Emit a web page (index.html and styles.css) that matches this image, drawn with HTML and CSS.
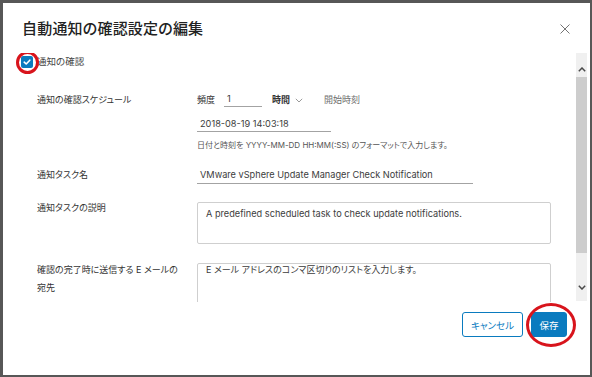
FILE: index.html
```html
<!DOCTYPE html>
<html lang="ja">
<head>
<meta charset="utf-8">
<title>自動通知の確認設定の編集</title>
<link rel="stylesheet" href="styles.css">
</head>
<body>
<div class="dialog">
  <div class="header">
    <h1 class="title">自動通知の確認設定の編集</h1>
    <svg class="close" width="10" height="10" viewBox="0 0 10 10"><path d="M0.5 0.5 L9.5 9.5 M9.5 0.5 L0.5 9.5" stroke="#747474" stroke-width="1" fill="none"/></svg>
  </div>
  <div class="body">
    <div class="content">
      <div class="check-row">
        <span class="checkbox"><svg width="12" height="12" viewBox="0 0 12 12"><path d="M3.2 6.2 L5.2 8 L8.8 4.2" stroke="#fff" stroke-width="1.6" fill="none" stroke-linecap="round" stroke-linejoin="round"/></svg></span>
        <span class="check-label">通知の確認</span>
        <span class="ring ring-check"></span>
      </div>

      <div class="row row-schedule">
        <div class="label">通知の確認スケジュール</div>
        <div class="control">
          <div class="freq-line">
            <span class="freq-text">頻度</span>
            <span class="input freq">1</span>
            <span class="unit">時間</span>
            <svg class="chev" width="8" height="5" viewBox="0 0 8 5"><path d="M0.8 0.8 L4 4 L7.2 0.8" stroke="#9a9a9a" stroke-width="1" fill="none"/></svg>
            <span class="muted">開始時刻</span>
          </div>
          <div class="input date">2018-08-19 14:03:18</div>
          <div class="help">日付と時刻を YYYY-MM-DD HH:MM(:SS) のフォーマットで入力します。</div>
        </div>
      </div>

      <div class="row row-task">
        <div class="label">通知タスク名</div>
        <div class="input task">VMware vSphere Update Manager Check Notification</div>
      </div>

      <div class="row row-desc">
        <div class="label label-tight">通知タスクの説明</div>
        <div class="textarea desc">A predefined scheduled task to check update notifications.</div>
      </div>

      <div class="row row-email">
        <div class="label label-wrap">確認の完了時に送信する E メールの<span class="nw">宛先</span></div>
        <div class="textarea email">E メール アドレスのコンマ区切りのリストを入力します。</div>
      </div>
    </div>
    <div class="scrollbar">
      <div class="sb-up"><svg width="8" height="5" viewBox="0 0 8 5"><path d="M0.8 4.2 L4 1 L7.2 4.2" stroke="#4a4a4a" stroke-width="1.5" fill="none"/></svg></div>
      <div class="sb-thumb"></div>
      <div class="sb-down"><svg width="8" height="5" viewBox="0 0 8 5"><path d="M0.8 0.8 L4 4 L7.2 0.8" stroke="#4a4a4a" stroke-width="1.5" fill="none"/></svg></div>
    </div>
  </div>
  <div class="footer">
    <button class="btn btn-outline">キャンセル</button>
    <span class="save-wrap">
      <button class="btn btn-primary">保存</button>
      <span class="ring ring-save"></span>
    </span>
  </div>
</div>
</body>
</html>
```

FILE: styles.css
```css
* { box-sizing: border-box; }
html, body { margin: 0; padding: 0; }
body {
  width: 592px;
  height: 377px;
  background: #575757;
  overflow: hidden;
  font-family: Inter, "Noto Sans CJK JP", sans-serif;
  font-feature-settings: "palt";
  color: #333;
}
.dialog {
  position: relative;
  margin: 3px 2px 2px 3px;
  width: 587px;
  height: 372px;
  background: #fff;
  display: flex;
  flex-direction: column;
}
.header {
  height: 50px;
  flex: none;
  display: flex;
  align-items: flex-start;
  justify-content: space-between;
  padding: 15px 20px 0 19px;
}
.title {
  margin: 0;
  font-family: "Noto Sans CJK JP", sans-serif;
  font-size: 15px;
  line-height: 20px;
  font-weight: 500;
  color: #222;
  letter-spacing: 0.2px;
}
.close { margin-top: 6px; }
.body {
  height: 249px;
  flex: none;
  display: flex;
}
.content {
  width: 573px;
  height: 249px;
  overflow: hidden;
  padding: 2px 0 0 0;
  font-size: 9.2px;
}
.check-row {
  position: relative;
  height: 14px;
  display: flex;
  align-items: center;
  padding-left: 18px;
}
.checkbox {
  width: 12px;
  height: 12px;
  border-radius: 2px;
  background: #0a7bbf;
  display: flex;
}
.check-label {
  margin-left: 4px;
  font-size: 9.5px;
  line-height: 14px;
  color: #444;
}
.ring {
  position: absolute;
  border: 3px solid #d8141c;
  border-radius: 50%;
}
.ring-check {
  left: 13px;
  top: -4px;
  width: 23px;
  height: 23px;
}
.row {
  display: flex;
  padding-left: 34px;
}
.label {
  width: 160px;
  flex: none;
  line-height: 18px;
  color: #333;
  font-size: 9px;
}
.label-tight { line-height: 14px; }
.label-wrap { padding-right: 10px; }
.nw { white-space: nowrap; }
.row-schedule { margin-top: 22px; }
.control { display: flex; flex-direction: column; }
.freq-line {
  display: flex;
  align-items: center;
  height: 18px;
}
.freq-line > span { line-height: 18px; }
.freq-text { font-size: 9px; }
.input {
  border-bottom: 1px solid #a3a3a3;
  color: #3c3c3c;
  line-height: 15px;
  padding-left: 3px;
  white-space: nowrap;
}
.freq-line .freq {
  align-self: flex-start;
  width: 38px;
  height: 16px;
  line-height: 15px;
  margin-left: 9px;
}
.unit { margin-left: 10px; font-weight: 700; color: #333; font-size: 9px; }
.chev { margin-left: 5px; }
.muted { margin-left: 21px; color: #6e6e6e; font-size: 9px; }
.date { width: 134px; height: 16px; margin-top: 7px; }
.help {
  margin-top: 7px;
  font-size: 8px;
  line-height: 12px;
  color: #555;
  white-space: nowrap;
}
.row-task { margin-top: 15px; height: 18px; }
.task { width: 276px; height: 17px; margin-top: 1px; line-height: 16px; }
.row-desc { margin-top: 17px; }
.textarea {
  width: 354px;
  border: 1px solid #cfcfcf;
  border-radius: 2px;
  padding-left: 8px;
  color: #3c3c3c;
  line-height: 14px;
}
.desc { height: 42px; margin-top: 1px; padding-top: 4px; }
.row-email { margin-top: 17px; }
.email { height: 60px; margin-top: 2px; padding-top: 0px; line-height: 12px; font-size: 9px; }
.scrollbar {
  width: 11px;
  height: 248px;
  flex: none;
  background: #f0f0f0;
  display: flex;
  flex-direction: column;
}
.sb-up {
  height: 24px;
  display: flex;
  justify-content: center;
  padding-top: 14px;
}
.sb-thumb { height: 176px; background: #cdcdcd; }
.sb-down {
  flex: 1;
  display: flex;
  justify-content: center;
  padding-top: 32px;
}
.footer {
  flex: 1;
  display: flex;
  justify-content: flex-end;
  align-items: flex-start;
  gap: 8px;
  padding: 10px 23px 0 0;
}
.btn {
  height: 25px;
  border-radius: 3px;
  font-family: inherit;
  font-size: 9.5px;
  font-feature-settings: "palt";
  padding: 0;
  margin: 0;
  cursor: pointer;
}
.btn-outline {
  width: 61px;
  background: #fff;
  border: 1px solid #0a7bbf;
  color: #0a7bbf;
}
.save-wrap { position: relative; display: flex; }
.btn-primary {
  width: 36px;
  background: #0a7bbf;
  border: 1px solid #0a7bbf;
  color: #fff;
}
.ring-save {
  left: -5px;
  top: -9px;
  width: 50px;
  height: 44px;
}
```
